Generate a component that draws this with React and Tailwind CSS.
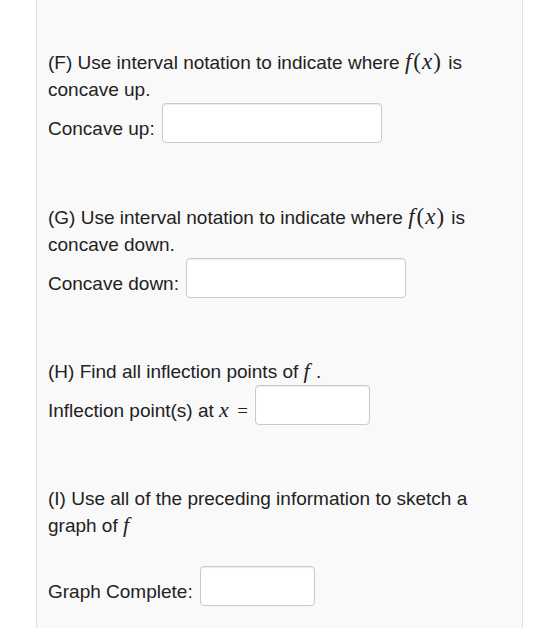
import React from "react";

const Fx = () => (
  <span className="font-['Liberation_Serif',serif] text-[23px] leading-none mr-[2px]">
    <i className="mr-[2px]">f</i>(<i className="mx-[1px]">x</i>)
  </span>
);

const F = () => (
  <i className="font-['Liberation_Serif',serif] text-[22px] leading-none mr-[1px]">f</i>
);

const Answer = ({ label, width }) => (
  <div className="flex items-start gap-[7px]">
    <span className="mt-[12px] leading-[27px]">{label}</span>
    <input
      type="text"
      className={`h-[40px] ${width} rounded-[4px] border border-[#c9c9c9] bg-white shadow-[inset_0_1px_1px_rgba(0,0,0,0.075)] outline-none`}
    />
  </div>
);

export default function App() {
  return (
    <div className="min-h-[628px] bg-white font-['Liberation_Sans',Arial,sans-serif] text-[19px] leading-[27px] text-[#222]">
      <div className="ml-[36px] w-[487px] min-h-[628px] border-x border-[#e2e2e2] bg-[#f9f9f9] px-[11px] pt-[49px]">
        <p>
          (F) Use interval notation to indicate where <Fx /> is concave up.
        </p>
        <Answer label="Concave up:" width="w-[220px]" />

        <p className="mt-[61px]">
          (G) Use interval notation to indicate where <Fx /> is concave down.
        </p>
        <Answer label="Concave down:" width="w-[220px]" />

        <p className="mt-[60px]">
          (H) Find all inflection points of <F /> .
        </p>
        <Answer
          label={
            <>
              Inflection point(s) at{" "}
              <i className="font-['Liberation_Serif',serif] text-[22px] leading-none mr-[2px]">x</i>{" "}
              <span className="font-['Liberation_Serif',serif] ml-[1px]">=</span>
            </>
          }
          width="w-[115px]"
        />

        <p className="mt-[60px]">
          (I) Use all of the preceding information to sketch a graph of <F />
        </p>
        <div className="h-[27px]" />
        <Answer label="Graph Complete:" width="w-[115px]" />
      </div>
    </div>
  );
}
